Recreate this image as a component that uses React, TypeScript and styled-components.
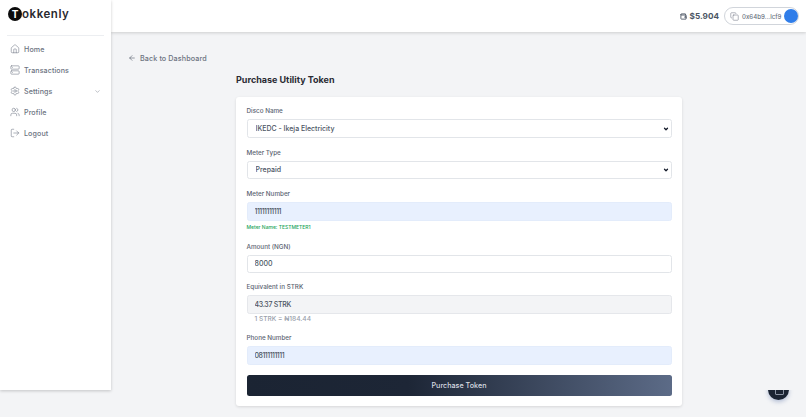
import React from "react";
import styled, { createGlobalStyle } from "styled-components";
import {
  ArrowLeft,
  ChevronDown,
  Copy,
  House,
  LogOut,
  Server,
  Settings,
  Users,
  Wallet,
} from "lucide-react";

const GlobalStyle = createGlobalStyle`
  html, body {
    margin: 0;
    height: 100%;
    overflow: hidden;
    background: #f3f4f6;
    font-family: Inter, "Open Sans", sans-serif;
  }
  * { box-sizing: border-box; }
`;

const Shell = styled.div`
  display: flex;
  align-items: flex-start;
  width: 806px;
  height: 417px;
  overflow: hidden;
`;

const Sidebar = styled.aside`
  position: relative;
  z-index: 2;
  width: 111px;
  height: 390px;
  flex: none;
  padding: 0 7px 0 10px;
  background: #fff;
  box-shadow: 0 1px 3px rgba(0, 0, 0, 0.2);
`;

const Brand = styled.div`
  display: flex;
  align-items: center;
  height: 36px;
  margin-left: -3px;
  padding-bottom: 7px;
  padding-left: 1px;
  border-bottom: 1px solid #eceef1;
`;

const BrandMark = styled.span`
  display: flex;
  align-items: center;
  justify-content: center;
  width: 14px;
  height: 14px;
  border-radius: 50%;
  background: #0b0b0b;
  color: #fff;
  font-size: 10px;
  font-weight: 700;
  line-height: 1;
`;

const BrandName = styled.span`
  font-size: 11.5px;
  font-weight: 600;
  letter-spacing: 0.55px;
  color: #2a2a2e;
`;

const Nav = styled.nav`
  display: flex;
  flex-direction: column;
  gap: 3px;
  padding-top: 4px;
`;

const NavItem = styled.div`
  display: flex;
  align-items: center;
  gap: 4px;
  height: 18px;
  padding-right: 3px;
  font-size: 7.1px;
  font-weight: 500;
  letter-spacing: 0.1px;
  color: #6b7280;
  svg { flex: none; }
`;

const NavChevron = styled.span`
  display: flex;
  margin-left: auto;
`;

const Main = styled.div`
  flex: 1;
  min-width: 0;
`;

const Header = styled.header`
  display: flex;
  align-items: center;
  justify-content: flex-end;
  gap: 5px;
  height: 32px;
  padding-right: 7px;
  background: #fff;
  box-shadow: 0 1px 3px rgba(0, 0, 0, 0.16);
`;

const Balance = styled.div`
  display: flex;
  align-items: center;
  gap: 3px;
  font-size: 8.2px;
  font-weight: 700;
  color: #4b5563;
`;

const WalletPill = styled.div`
  display: flex;
  align-items: center;
  gap: 3px;
  width: 75px;
  height: 18px;
  padding: 0 1.5px 0 5px;
  border: 1px solid #d1d5db;
  border-radius: 9px;
  font-size: 6.1px;
  font-weight: 500;
  color: #6b7280;
  white-space: nowrap;
  svg { flex: none; }
`;

const Avatar = styled.span`
  flex: none;
  width: 14px;
  height: 14px;
  margin-left: auto;
  border-radius: 50%;
  background: #2f7de9;
`;

const Content = styled.div`
  padding: 21px 124px 0 17px;
`;

const BackLink = styled.div`
  display: flex;
  align-items: center;
  gap: 4px;
  height: 10px;
  font-size: 7.2px;
  font-weight: 500;
  letter-spacing: 0.1px;
  color: #6b7280;
  svg { color: #374151; }
`;

const FormColumn = styled.div`
  margin-left: 108px;
  width: 446px;
`;

const Title = styled.h1`
  margin: 10px 0 10px;
  font-size: 9px;
  line-height: 14px;
  font-weight: 700;
  color: #2a2b33;
`;

const Card = styled.form`
  display: flex;
  flex-direction: column;
  height: 309px;
  padding: 9px 10.5px;
  background: #fff;
  border-radius: 3px;
  box-shadow: 0 1px 3px rgba(0, 0, 0, 0.12);
`;

const Field = styled.div<{ $gap?: number }>`
  margin-bottom: ${(p) => p.$gap ?? 10}px;
`;

const Label = styled.label`
  display: block;
  height: 13px;
  font-size: 6.3px;
  line-height: 11.5px;
  font-weight: 500;
  color: #5b6472;
`;

const SelectWrap = styled.div`
  position: relative;
  svg {
    position: absolute;
    right: 2.5px;
    top: 6.5px;
    color: #111827;
    pointer-events: none;
  }
`;

const Select = styled.select`
  display: block;
  width: 100%;
  height: 18.5px;
  padding: 0 8px;
  border: 1px solid #e2e5e9;
  border-radius: 2.5px;
  appearance: none;
  background: #fff;
  font-family: inherit;
  font-size: 7px;
  font-weight: 500;
  color: #4b5563;
`;

const Input = styled.input<{ $tone?: "plain" | "filled" | "muted"; $track?: number }>`
  display: block;
  width: 100%;
  height: 18.5px;
  padding: 0 7px;
  border: 1px solid
    ${(p) =>
      p.$tone === "filled" ? "#e3ecfb" : p.$tone === "muted" ? "#e5e7eb" : "#e2e5e9"};
  border-radius: 2.5px;
  outline: none;
  background: ${(p) =>
    p.$tone === "filled" ? "#e8f0fe" : p.$tone === "muted" ? "#f3f4f6" : "#fff"};
  font-family: inherit;
  font-size: 7px;
  font-weight: 500;
  letter-spacing: ${(p) => p.$track ?? 0}px;
  color: #4b5563;
`;

const Hint = styled.p`
  margin: 3px 0 0;
  font-size: 5px;
  line-height: 7px;
  font-weight: 500;
  color: #22a45a;
`;

const Rate = styled.p`
  margin: 1px 0 0 8px;
  font-size: 6.6px;
  line-height: 9px;
  font-weight: 500;
  color: #9aa1ac;
`;

const Submit = styled.button`
  width: 100%;
  height: 21px;
  flex: none;
  margin-top: 0.5px;
  border: none;
  border-radius: 2.5px;
  background: linear-gradient(90deg, #1b2433 0%, #1d2636 38%, #5c6b87 100%);
  font-family: inherit;
  font-size: 7.2px;
  font-weight: 500;
  color: #d9dde3;
`;

/* chat button sits behind the bottom edge, only its lower half shows */
const FloatClip = styled.div`
  position: fixed;
  left: 762px;
  top: 390px;
  width: 32px;
  height: 20px;
  overflow: hidden;
`;

const FloatButton = styled.div`
  position: absolute;
  left: 6px;
  top: -11px;
  width: 21px;
  height: 21px;
  border-radius: 50%;
  background: #1b2433;
  box-shadow: 0 2px 4px rgba(59, 89, 152, 0.35);
  &::after {
    content: "";
    position: absolute;
    left: 7px;
    top: 9px;
    width: 7px;
    height: 5px;
    border: 1px solid #8a93a3;
    border-radius: 1px;
  }
`;

const navItems = [
  { label: "Home", icon: House },
  { label: "Transactions", icon: Server },
  { label: "Settings", icon: Settings, more: true },
  { label: "Profile", icon: Users },
  { label: "Logout", icon: LogOut },
];

export default function App() {
  return (
    <>
      <GlobalStyle />
      <Shell>
        <Sidebar>
          <Brand>
            <BrandMark>T</BrandMark>
            <BrandName>okkenly</BrandName>
          </Brand>
          <Nav>
            {navItems.map((item) => (
              <NavItem key={item.label}>
                <item.icon size={10} strokeWidth={1.3} />
                {item.label}
                {item.more && (
                  <NavChevron>
                    <ChevronDown size={7} strokeWidth={1.5} />
                  </NavChevron>
                )}
              </NavItem>
            ))}
          </Nav>
        </Sidebar>
        <Main>
          <Header>
            <Balance>
              <Wallet size={7} strokeWidth={3} />
              $5.904
            </Balance>
            <WalletPill>
              <Copy size={9} strokeWidth={1.4} />
              0x64b9...lcf9
              <Avatar />
            </WalletPill>
          </Header>
          <Content>
            <BackLink>
              <ArrowLeft size={8} strokeWidth={1.5} />
              Back to Dashboard
            </BackLink>
            <FormColumn>
              <Title>Purchase Utility Token</Title>
              <Card>
                <Field>
                  <Label>Disco Name</Label>
                  <SelectWrap>
                    <Select defaultValue="ikedc">
                      <option value="ikedc">IKEDC - Ikeja Electricity</option>
                    </Select>
                    <ChevronDown size={6} strokeWidth={5} />
                  </SelectWrap>
                </Field>
                <Field>
                  <Label>Meter Type</Label>
                  <SelectWrap>
                    <Select defaultValue="prepaid">
                      <option value="prepaid">Prepaid</option>
                    </Select>
                    <ChevronDown size={6} strokeWidth={5} />
                  </SelectWrap>
                </Field>
                <Field $gap={11}>
                  <Label>Meter Number</Label>
                  <Input $tone="filled" $track={-0.5} defaultValue="11111111111" />
                  <Hint>Meter Name: TESTMETER1</Hint>
                </Field>
                <Field $gap={9}>
                  <Label>Amount (NGN)</Label>
                  <Input defaultValue="8000" />
                </Field>
                <Field $gap={9.5}>
                  <Label>Equivalent in STRK</Label>
                  <Input $tone="muted" $track={-0.3} defaultValue="43.37 STRK" readOnly />
                  <Rate>1 STRK = ₦184.44</Rate>
                </Field>
                <Field>
                  <Label>Phone Number</Label>
                  <Input $tone="filled" $track={-0.5} defaultValue="08111111111" />
                </Field>
                <Submit type="button">Purchase Token</Submit>
              </Card>
            </FormColumn>
          </Content>
        </Main>
        <FloatClip>
          <FloatButton />
        </FloatClip>
      </Shell>
    </>
  );
}
